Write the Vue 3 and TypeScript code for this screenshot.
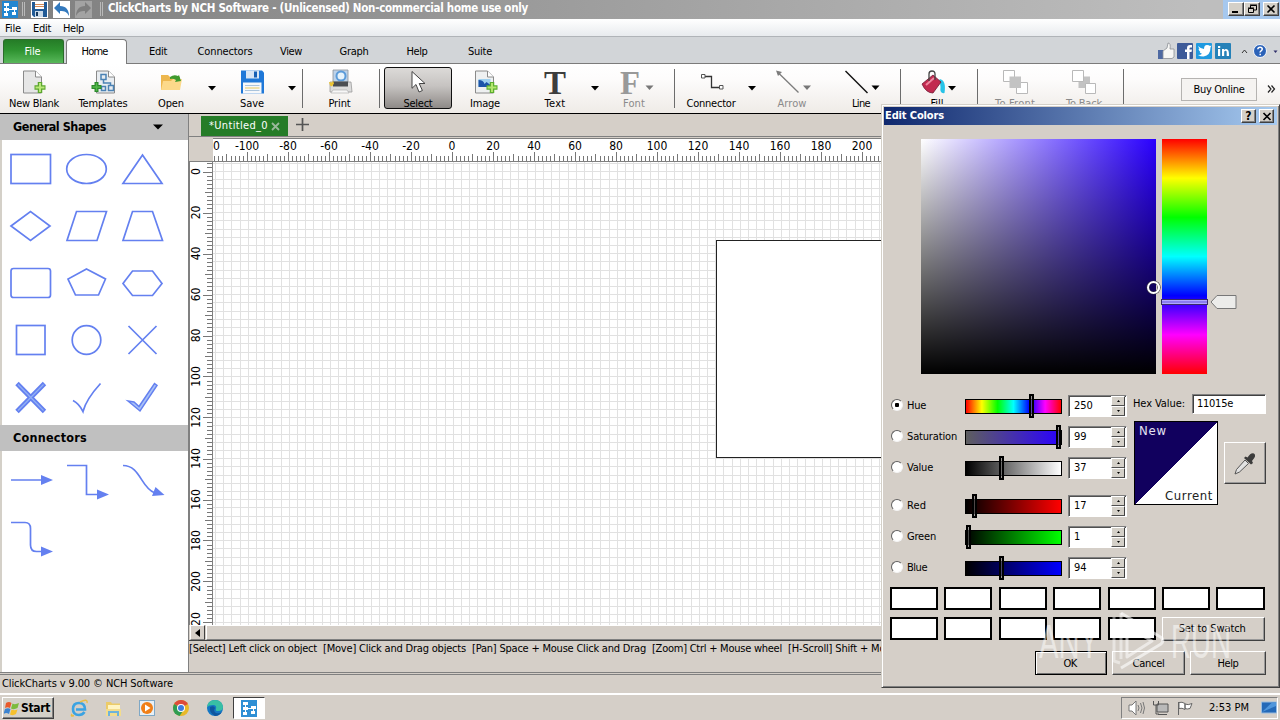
<script setup lang="ts">
interface Tool {
  id: string
  w: number
  label?: string
  tw?: number
  gap?: number
  off?: boolean
}

const setSpacing = (el: HTMLElement, width: number) => {
  const n = (el.textContent ?? '').length
  const natural = el.getBoundingClientRect().width
  if (n > 1 && natural > 0) el.style.letterSpacing = `${((width - natural) / n).toFixed(3)}px`
}
const vTrack = {
  mounted: (el: HTMLElement, binding: { value?: number }) => {
    if (binding.value) setSpacing(el, binding.value)
  },
}

const menus = [
  { t: 'File', w: 16 },
  { t: 'Edit', w: 18 },
  { t: 'Help', w: 21 },
]

const tabs = [
  { t: 'Edit', w: 18, cell: 62 },
  { t: 'Connectors', w: 55, cell: 72 },
  { t: 'View', w: 22, cell: 60 },
  { t: 'Graph', w: 29, cell: 66 },
  { t: 'Help', w: 21, cell: 60 },
  { t: 'Suite', w: 24, cell: 66 },
]

const tools: Tool[] = [
  { id: 'new', w: 68, label: 'New Blank', tw: 50 },
  { id: 'templates', w: 70, label: 'Templates', tw: 49 },
  { id: 'open', w: 66, label: 'Open', tw: 26 },
  { id: 'drop', w: 16 },
  { id: 'save', w: 64, label: 'Save', tw: 24 },
  { id: 'drop', w: 16 },
  { id: 'sep', w: 5 },
  { id: 'print', w: 69, label: 'Print', tw: 22 },
  { id: 'sep', w: 10 },
  { id: 'select', w: 68, label: 'Select', tw: 29 },
  { id: 'image', w: 66, label: 'Image', tw: 30 },
  { id: 'text', w: 64, gap: 5, label: 'Text', tw: 21 },
  { id: 'drop', w: 16 },
  { id: 'font', w: 62, label: 'Font', tw: 22, off: true },
  { id: 'sep', w: 18 },
  { id: 'connector', w: 56, label: 'Connector', tw: 49 },
  { id: 'drop', w: 26 },
  { id: 'arrow', w: 54, label: 'Arrow', tw: 29, off: true },
  { id: 'line', w: 72, gap: 6, label: 'Line', tw: 18 },
  { id: 'sep', w: 6 },
  { id: 'fill', w: 68, label: 'Fill', tw: 13 },
  { id: 'sep', w: 12 },
  { id: 'front', w: 64, label: 'To Front', tw: 40, off: true },
  { id: 'back', w: 74, label: 'To Back', tw: 36, off: true },
  { id: 'sep', w: 5 },
]

const range = (n: number) => Array.from({ length: n }, (_, i) => i)

const STEP = 4.1
const snap = (v: number) => Math.floor(v) + 0.5
const tickLen = (k: number) => (k % 10 === 0 ? 9 : k % 5 === 0 ? 7 : 5)

const topTicks = range(400)
  .map((i) => i - 70)
  .map((k) => ({ x: snap(239.4 + k * STEP), k }))
  .filter((t) => t.x > 0 && t.x < 680)
  .map((t) => `M${t.x} 22V${22 - tickLen(t.k)}`)
  .join('')
const topLabels = range(16).map((i) => ({ v: (i - 5) * 20, x: 239 + (i - 5) * 41 }))

const leftTicks = range(130)
  .map((i) => i - 2)
  .map((k) => ({ y: snap(10 + k * STEP), k }))
  .filter((t) => t.y > 0 && t.y < 463)
  .map((t) => `M22 ${t.y}H${22 - tickLen(t.k)}`)
  .join('')
const leftLabels = range(12).map((i) => ({ v: i * 20, y: 9.5 + i * 41 }))

const gridV = range(90)
  .map((k) => `M${snap(2.5 + k * 8.2)} 0V463`)
  .join('')
const gridH = range(60)
  .map((k) => `M0 ${snap(1.5 + k * 8.2)}H680`)
  .join('')

const hints = [
  { t: '[Select] Left click on object', w: 128 },
  { t: '[Move] Click and Drag objects', w: 143 },
  { t: '[Pan] Space + Mouse Click and Drag', w: 174 },
  { t: '[Zoom] Ctrl + Mouse wheel', w: 130 },
  { t: '[H-Scroll] Shift + Mouse wheel', w: 146 },
]

const channels = [
  { id: 'hue', t: 'Hue', w: 19, v: '250', at: 63, on: true },
  { id: 'sat', t: 'Saturation', w: 50, v: '99', at: 90, on: false },
  { id: 'val', t: 'Value', w: 26, v: '37', at: 33, on: false },
  { id: 'red', t: 'Red', w: 19, v: '17', at: 6, on: false },
  { id: 'green', t: 'Green', w: 29, v: '1', at: 0, on: false },
  { id: 'blue', t: 'Blue', w: 20, v: '94', at: 33, on: false },
]
</script>

<template>
  <div class="screen">
    <header class="title">
      <svg class="title-icons" width="106" height="19" viewBox="0 0 106 19">
        <rect x="2" y="1" width="16" height="17" fill="#2286d0" />
        <path d="M4 3h5v3H4zM4 8h5v3H4zM4 13h4v3H4zM12 7h5v3h-5zM12 12h4v3h-4z" fill="#fff" />
        <path d="M6.500 6v7M9 9.500h3M14.500 9v4" stroke="#fff" />
        <path d="M22.500 2v14M24.500 2v14M100.500 2v14M102.500 2v14" stroke="#b9b9b9" />
        <rect x="31" y="1" width="17" height="17" fill="#fff" />
        <path d="M32 2h15v15H34l-2-2z" fill="#205a96" />
        <path d="M35 2h9v7h-9z" fill="#fff" />
        <path d="M35 4.500h9M35 6.500h9" stroke="#d48a56" />
        <path d="M35 11h8v6h-8z" fill="#c9dae9" />
        <path d="M36 12h2v4h-2z" fill="#17395f" />
        <rect x="53" y="1" width="17" height="17" fill="#fff" />
        <path d="M54 8l6-6v4c6 0 9 4 9 10c-2-4-4-5-9-5v3z" fill="#3379bd" />
        <rect x="75" y="1" width="17" height="17" fill="#a3a3a3" />
        <path d="M91 8l-6-6v4c-6 0-9 4-9 10c2-4 4-5 9-5v3z" fill="#7e7e7e" />
      </svg>
      <b v-track="420" class="title-text">ClickCharts by NCH Software - (Unlicensed) Non-commercial home use only</b>
      <div class="win-buttons">
        <i class="wb"><svg width="14" height="12"><path d="M3 9h6" stroke="#000" stroke-width="2" /></svg></i>
        <i class="wb"><svg width="14" height="12"><path d="M5.500 5V2.500h6V7H9M5 2h7M3.500 5.500h5v4h-5zM3 5h6" fill="none" stroke="#000" /></svg></i>
        <i class="wb last"><svg width="14" height="12"><path d="M3.500 2.500l7 7M10.500 2.500l-7 7" stroke="#000" stroke-width="1.600" /></svg></i>
      </div>
    </header>

    <nav class="menu">
      <span v-for="m in menus" :key="m.t" class="menu-item"><span v-track="m.w" class="tx">{{ m.t }}</span></span>
    </nav>

    <nav class="tabs">
      <span class="tab file"><span v-track="16" class="tx">File</span></span>
      <span class="tab home"><span v-track="26" class="tx">Home</span></span>
      <span v-for="t in tabs" :key="t.t" class="tab" :style="{ width: t.cell + 'px' }"><span v-track="t.w" class="tx">{{ t.t }}</span></span>
      <svg class="social" width="122" height="24" viewBox="1158 39 122 24">
        <path d="M1158 50h5v9h-5z" fill="#4e69a2" />
        <path d="M1163 51l4-3 1-5q3 0 2 6h4v8l-2 1.500h-9z" fill="#f7f7f5" stroke="#8c8f96" stroke-width=".8" />
        <rect x="1177" y="43" width="16" height="16" rx="1" fill="#3d5a98" />
        <path d="M1187 59v-7h-2v-2.500h2V48q0-3 3-3h2v2.500h-1.500q-1 0-1 1v1h2.500l-.5 2.500h-2v7z" fill="#fff" />
        <rect x="1196" y="43" width="16" height="16" rx="1" fill="#1f9ae0" />
        <path d="M1198 46q3 3 6 3q0-4 3-4q2 0 3 1l1.500-.5-1 2q0 8-7 9-3 0-5.500-1.500 3 0 4-1.200-2-.3-2.500-2h1q-2-1-2-3l1 .2q-1.500-1.300-.5-3z" fill="#fff" />
        <rect x="1215" y="43" width="16" height="16" rx="1" fill="#2581b8" />
        <path d="M1218 49h2.200v7h-2.200zM1218 46h2.200v2h-2.200zM1222 49h2v1q2-2 4 0q1 .8 1 6h-2.300v-4q0-1.300-1.200-1.300t-1.300 1.300v4H1222z" fill="#fff" />
        <path d="M1242 53l2.500-3 2.500 3" fill="none" stroke="#333" />
        <circle cx="1260" cy="51" r="6.500" fill="#2b62b8" stroke="#f5f8fc" />
        <path d="M1257.800 49.300q.2-2 2.300-2t2.200 1.800q0 1-1.200 1.700t-.9 1.700M1260.200 53.700v1.600" fill="none" stroke="#fff" stroke-width="1.500" />
        <path d="M1273.500 50.500h4l-2 2.500z" fill="#2f2f6a" />
      </svg>
    </nav>

    <div class="ribbon">
      <div
        v-for="(t, i) in tools"
        :key="i"
        class="tool"
        :class="[t.id, { off: t.off }]"
        :style="{ width: t.w + 'px', marginLeft: (t.gap ?? 0) + 'px' }"
      >
        <svg v-if="t.id === 'drop'" class="drop-icon" width="9" height="5"><path d="M0 0h8L4 4.500z" fill="#000" /></svg>
        <template v-else-if="t.id !== 'sep'">
          <svg class="tool-icon" width="60" height="30" viewBox="-30 68 60 30">
            <g v-if="t.id === 'new'">
              <path d="M-10.500 71h12l6 6v16h-18z" fill="#e6e6e6" stroke="#8a8a8a" />
              <path d="M1.500 71v6h6" fill="#fff" stroke="#8a8a8a" />
              <path d="M6 82v11M.5 87.500h11" stroke="#5ca62e" stroke-width="4.500" />
              <path d="M6 83v9M1.500 87.500h9" stroke="#b8e878" stroke-width="2" />
            </g>
            <g v-else-if="t.id === 'templates'">
              <path d="M-6.500 71h12l6 6v16h-18z" fill="#e9edf1" stroke="#8a8a8a" />
              <path d="M5.500 71v6h6" fill="#fff" stroke="#8a8a8a" />
              <path d="M-2 74.500h5v5h-5zM-1.500 86.500h4v4h-4zM5.500 85.500h5v5h-5zM.5 80v3h7v2" fill="none" stroke="#4b82b4" stroke-width="1.500" />
              <path d="M-6.500 82v10M-11.500 87h10" stroke="#2c8a2c" stroke-width="4" />
              <path d="M-6.500 83v8M-10.500 87h8" stroke="#54b84a" stroke-width="1.500" />
            </g>
            <g v-else-if="t.id === 'open'">
              <path d="M-10 75h7l2 2h10v13h-19z" fill="#edb74e" />
              <path d="M-10 90l2-9h8l2-2h9l-2 11z" fill="#fcd98a" />
              <path d="M-1 77q4-3 8-1l1-1 2 6-6 1 1-2q-3-2-6-1z" fill="#3f9a2e" />
            </g>
            <g v-else-if="t.id === 'save'">
              <path d="M-11 70.500h21l2 2V93.500h-23z" fill="#1f78d8" />
              <path d="M-6 70.500H7v8H-6z" fill="#d9e6f4" />
              <path d="M2 71.500h3v6H2z" fill="#1760b4" />
              <path d="M-9 82.500H9.500v11H-9z" fill="#f6f8fa" />
              <path d="M-7 85.500H7.500M-7 90.500H7.500" stroke="#aac4dc" />
              <path d="M-7 88H7.500" stroke="#e8c95c" />
            </g>
            <g v-else-if="t.id === 'print'">
              <path d="M-7 70h15v13H-7z" fill="#bcd2ea" stroke="#8d9298" stroke-width=".8" />
              <circle cx="1" cy="76" r="4.500" fill="#e7f3fb" stroke="#5b9bd9" stroke-width="2" />
              <path d="M-10 82h21l1 10h-22z" fill="#dcdcdc" stroke="#9a9a9a" stroke-width=".8" />
              <path d="M-7 81.500H8v5H-7z" fill="#4b4e52" />
              <path d="M-7 90h14l2 3h-18z" fill="#f7f7f7" stroke="#aaa" stroke-width=".6" />
              <path d="M-11 82l3 .5 1-2 1 3-2 3-2-1z" fill="#ecc434" />
            </g>
            <g v-else-if="t.id === 'select'">
              <path d="M-6 71.500v16.800l4-3.800 3 7.500 3.400-1.500-3.200-7h5.800z" fill="#fff" stroke="#444" />
            </g>
            <g v-else-if="t.id === 'image'">
              <path d="M-9.500 71H2.500l6 6v16h-18z" fill="#eef0f1" stroke="#8a8a8a" />
              <path d="M2.500 71v6h6" fill="#fff" stroke="#8a8a8a" />
              <path d="M-6.500 79H5.500v8h-12z" fill="#9fd0ef" />
              <path d="M-6.500 80q5 0 6 4l2-2 4 3v2h-12z" fill="#1c55a8" />
              <path d="M7 82v11M1.500 87.500h11" stroke="#5cae2e" stroke-width="4.500" />
              <path d="M7 83v9M2.500 87.500h9" stroke="#b3e66e" stroke-width="2" />
            </g>
            <g v-else-if="t.id === 'text'">
              <text x="0" y="93.500" text-anchor="middle" class="glyph" textLength="22" lengthAdjust="spacingAndGlyphs">T</text>
            </g>
            <g v-else-if="t.id === 'font'">
              <text x="-4" y="93.500" text-anchor="middle" class="glyph grey" textLength="20" lengthAdjust="spacingAndGlyphs">F</text>
              <path d="M11.500 85.500h8l-4 4.500z" fill="#777" />
            </g>
            <g v-else-if="t.id === 'connector'">
              <path d="M-6 76.500H.5v11H8" fill="none" stroke="#333" stroke-width="1.300" />
              <path d="M-9.500 74.500h3.500v3.500h-3.500zM8.500 85.500H12V89H8.500z" fill="#fff" stroke="#555" />
            </g>
            <g v-else-if="t.id === 'arrow'">
              <path d="M6.500 92.500L-14 72.500" stroke="#7c7c7c" stroke-width="1.300" />
              <path d="M-16 70.500l6 1.500-4 4z" fill="#7c7c7c" />
              <path d="M11 85.500h8l-4 4.500z" fill="#777" />
            </g>
            <g v-else-if="t.id === 'line'">
              <path d="M-15.500 71L6.500 93" stroke="#111" stroke-width="1.500" />
              <path d="M10.500 85.500h8l-4 4.500z" fill="#000" />
            </g>
            <g v-else-if="t.id === 'fill'">
              <path d="M2.500 79q7 1 5 14q-5 1-4-6z" fill="#27c3e8" />
              <path d="M-15 84l11-9 8 7-8 11q-7 0-11-9z" fill="#c22b50" stroke="#6f1832" stroke-width=".8" />
              <path d="M-11 85l8-7" stroke="#ee88a0" stroke-width="2" />
              <path d="M-8 81v-7q0-3 3-3t3 3v6" fill="none" stroke="#444" stroke-width="1.300" />
              <path d="M11 86h8l-4 4.500z" fill="#000" />
            </g>
            <g v-else-if="t.id === 'front'">
              <path d="M-11.500 70.500h11v11h-11zM1.500 82.500h11v11h-11z" fill="#fff" stroke="#b9b9b9" />
              <path d="M-5.500 76.500H6v11.500H-5.500z" fill="#c3c3c3" />
            </g>
            <g v-else>
              <path d="M-5.500 76.500H6v11.500H-5.500z" fill="#c3c3c3" />
              <path d="M-11.500 70.500h11v11h-11zM1.500 83.500h10v10h-10z" fill="#fff" stroke="#b9b9b9" />
            </g>
          </svg>
          <span v-track="t.tw" class="tx">{{ t.label }}</span>
        </template>
      </div>
      <button class="buy"><span v-track="51" class="tx">Buy Online</span></button>
      <svg class="more" width="9" height="8"><path d="M1 .5L4 4 1 7.500M4.500 .5L7.500 4l-3 3.500" fill="none" stroke="#222" stroke-width="1.200" /></svg>
    </div>

    <main class="work">
      <aside class="side">
        <h2 class="side-head">
          <b v-track="93" class="tx big">General Shapes</b>
          <svg width="10" height="6"><path d="M0 .5h10L5 5.500z" fill="#000" /></svg>
        </h2>
        <svg class="shapes" width="186" height="285" viewBox="2 140 186 285">
          <g fill="none" stroke="#6480f0" stroke-width="1.700">
            <rect x="11" y="154.500" width="39.500" height="29" />
            <ellipse cx="86.500" cy="169" rx="19.800" ry="14.500" />
            <path d="M142.500 155l19.500 28.500h-39z" />
            <path d="M11 226l19.500-14.500L50 226l-19.500 14.500z" />
            <path d="M76.500 211.500h30L97 240.500H67z" />
            <path d="M132.500 211.500h20l10 29h-39.500z" />
            <rect x="11" y="268.500" width="39.500" height="29" rx="2.500" />
            <path d="M86.500 269l19 10-7 16H75.500l-7.500-16z" />
            <path d="M132.500 271h20l9.500 12.500-9.500 12h-20l-9.500-12z" />
            <rect x="16.500" y="325.500" width="28.500" height="29" />
            <circle cx="86.500" cy="340" r="14.300" />
            <path d="M128.500 326l28 28M156.500 326l-28 28" />
            <path d="M73 400.500q6 3 10 11q3-12 17.500-28" />
          </g>
          <path d="M17 383.500L44.500 411.500M44.500 383.500L17 411.500" fill="none" stroke="#6480f0" stroke-width="4.800" />
          <path d="M18 384.500L43.500 410.500M43.500 384.500L18 410.500" fill="none" stroke="#92b0f4" stroke-width="1.200" />
          <path d="M128 401l6 1 5 4.500L154.500 383.500l2.500 2L140 411z" fill="#a9c2f7" stroke="#6480f0" stroke-width="1.500" />
        </svg>
        <h2 class="side-head"><b v-track="74" class="tx big">Connectors</b></h2>
        <svg class="shapes" width="186" height="120" viewBox="2 451 186 120">
          <g fill="none" stroke="#6480f0" stroke-width="1.700">
            <path d="M11 480H42M67 465.500H86.500V494.500H98M11 522.500H25q5.500 0 5.500 6V545q0 6.500 6 6.500H42M123 465.500c17 0 18 22 31 27" />
          </g>
          <path d="M41 475l12 5-12 5zM97 489.500l12 5-12 5zM41 546.500l12 5-12 5zM155.500 487l9 8-12.500 1z" fill="#6480f0" />
        </svg>
      </aside>

      <section class="doc">
        <div class="doc-tabs">
          <span class="doc-tab"><span v-track="59" class="tx">*Untitled_0</span><svg width="9" height="9"><path d="M1 1l7 7M8 1L1 8" stroke="#9bb89b" stroke-width="1.800" /></svg></span>
          <svg class="plus" width="13" height="13"><path d="M6.500 0v13M0 6.500h13" stroke="#555" stroke-width="1.700" /></svg>
        </div>
        <div class="rulers">
          <div class="corner"></div>
          <svg class="ruler-top" width="1067" height="24">
            <path :d="topTicks" stroke="#777" />
            <text v-for="l in topLabels" :key="l.v" :x="l.x" y="11" text-anchor="middle" class="num">{{ l.v }}</text>
            <text x="0" y="11" class="num">0</text>
          </svg>
          <svg class="ruler-left" width="24" height="463">
            <path :d="leftTicks" stroke="#777" />
            <text v-for="l in leftLabels" :key="l.v" :transform="`translate(10 ${l.y}) rotate(-90)`" text-anchor="middle" class="num">{{ l.v }}</text>
          </svg>
          <svg class="canvas" width="1067" height="463">
            <path :d="gridV" stroke="#e1e1e1" />
            <path :d="gridH" stroke="#e1e1e1" />
            <rect x="503.500" y="78.500" width="300" height="217" fill="#fff" stroke="#222" />
          </svg>
        </div>
        <div class="hscroll">
          <i class="hs-btn"><svg width="5" height="8"><path d="M5 0v8L0 4z" fill="#000" /></svg></i>
          <i class="hs-thumb"></i>
        </div>
        <div class="hints"><span v-for="h in hints" :key="h.t" v-track="h.w" class="tx">{{ h.t }}</span></div>
      </section>
    </main>

    <footer class="status"><span v-track="171" class="tx">ClickCharts v 9.00 © NCH Software</span></footer>

    <footer class="taskbar">
      <button class="start">
        <svg width="16" height="15" viewBox="0 0 16 15">
          <path d="M2 2q3-2 5.500 0L6 7Q3.500 5.500 1 7z" fill="#e8592b" />
          <path d="M8.500 2.500Q11 4 15 2l-1.500 5Q10 9 7 7.500z" fill="#7cbb3c" />
          <path d="M1 8q3-1.500 5.500 0L5 13q-3-2-5.500 0z" fill="#3c83d0" />
          <path d="M7.500 8.500q3 1.500 6 0L12 13q-3 2-6 .5z" fill="#f6c02c" />
        </svg>
        <b v-track="29" class="tx st">Start</b>
      </button>
      <svg class="apps" width="165" height="20" viewBox="66 697 165 20">
        <path d="M84.500 711q-2 3-5.500 3-6 0-6-6t6-6q6 0 6 6.500h-9" fill="none" stroke="#3ba3e2" stroke-width="2.600" />
        <path d="M72 713q-2 3 2 1.500M80 701q8-4 7 1" fill="none" stroke="#e8bd47" stroke-width="1.400" />
        <path d="M106 701h5l1 1.500h8V714h-14z" fill="#eccb68" />
        <path d="M108 704h12v4h-12z" fill="#fff4c2" />
        <path d="M106 708h15v7h-15z" fill="#f3dc8c" />
        <path d="M109 715v-4h9v4" fill="none" stroke="#6eb3dc" stroke-width="2" />
        <rect x="139.500" y="699.500" width="15" height="15" fill="#e8f0f6" stroke="#7fa8c6" />
        <circle cx="147" cy="707" r="6" fill="#f07f18" />
        <path d="M145 703.500l5.500 3.500-5.500 3.500z" fill="#fff" />
        <circle cx="181" cy="707" r="8" fill="#e8b92a" />
        <path d="M181 707L174.100 703a8 8 0 0 1 13.800 0z" fill="#dd4b3b" />
        <path d="M181 707L174.100 703a8 8 0 0 0 5.500 11.900l4-6z" fill="#2f9c52" />
        <circle cx="181" cy="707" r="4" fill="#fff" />
        <circle cx="181" cy="707" r="3" fill="#3d7de0" />
        <circle cx="215" cy="707" r="8" fill="#1477c4" />
        <path d="M207 706q1-7 8-7t8 7q0 4-5 4-3 0-2-2 1-4-3-4-4 0-6 2z" fill="#38bfa4" />
        <path d="M210 706q4-2 5 1-2 3 1 5 3 1 6-1-3 4-7 4-6-3-5-9z" fill="#0f559d" />
      </svg>
      <span class="active">
        <svg width="16" height="17" viewBox="2 1 16 17">
          <rect x="2" y="1" width="16" height="17" fill="#2f8fd4" />
          <path d="M4 3h5v3H4zM4 8h5v3H4zM4 13h4v3H4zM12 7h5v3h-5zM12 12h4v3h-4z" fill="#fff" />
          <path d="M6.500 6v7M9 9.500h3M14.500 9v4" stroke="#fff" />
        </svg>
      </span>
      <div class="tray">
        <svg width="76" height="18" viewBox="1126 698 76 18">
          <path d="M1129 704h3l4-4v14l-4-4h-3z" fill="#fff" stroke="#777" />
          <path d="M1138 704q2 3 0 6M1140.500 702q3 5 0 10M1143 701q3 6 0 12" fill="none" stroke="#777" />
          <path d="M1157 703h11v8h-11z" fill="#b9b9b9" stroke="#555" />
          <path d="M1158 713.500h9" stroke="#555" />
          <path d="M1153.500 700v4h5v-4M1156 704v9h3" fill="none" stroke="#555" />
          <path d="M1178.500 701v13M1179 701.500q3-1 6 1v6q-3-2-6-1zM1185 703q3 1.500 7-.5l-2 5q-3 1-5 0z" fill="#fff" stroke="#666" />
        </svg>
        <span v-track="40" class="tx clock">2:53 PM</span>
        <svg class="desk" width="16" height="14"><path d="M.5 1h15v11H.5z" fill="#2469b8" stroke="#98bce0" /><path d="M1 11L11 1.500h4V5z" fill="#4f96dc" /></svg>
      </div>
    </footer>

    <div class="dialog">
      <div class="dlg-title">
        <b v-track="59" class="tx">Edit Colors</b>
        <span class="dlg-btns">
          <i class="wb"><b class="q">?</b></i>
          <i class="wb"><svg width="12" height="11"><path d="M2.500 2l7 7M9.500 2l-7 7" stroke="#000" stroke-width="1.700" /></svg></i>
        </span>
      </div>
      <div class="pickers">
        <div class="sv"><i class="ring"></i></div>
        <div class="hue-bar"><i class="hue-mark"></i></div>
        <svg class="pointer" width="28" height="16"><path d="M1 8l6-6.500h19v13H7z" fill="#ececea" stroke="#777" /></svg>
      </div>
      <div class="mid">
        <div class="channels">
          <div v-for="c in channels" :key="c.id" class="chan" :class="c.id">
            <i class="radio" :class="{ on: c.on }"></i>
            <span class="chan-name"><span v-track="c.w" class="tx">{{ c.t }}</span></span>
            <span class="slider"><i class="thumb" :style="{ left: c.at + 'px' }"></i></span>
            <span class="field">
              <span class="tx">{{ c.v }}</span>
              <span class="spin">
                <i><svg width="3" height="2"><path d="M0 2h3L1.500 0z" /></svg></i>
                <i><svg width="3" height="2"><path d="M0 0h3L1.500 2z" /></svg></i>
              </span>
            </span>
          </div>
        </div>
        <div class="right">
          <div class="hex"><span v-track="52" class="tx">Hex Value:</span><span class="hex-in"><span v-track="36" class="tx">11015e</span></span></div>
          <div class="preview-row">
            <div class="preview">
              <span v-track="28" class="tx new-c">New</span>
              <span v-track="48" class="tx cur-c">Current</span>
            </div>
            <button class="eye">
              <svg width="26" height="26" viewBox="0 0 26 26">
                <path d="M3 24l1.500-4.500L13 10l3.500 3.500L7.500 22z" fill="#e2e2e2" stroke="#555" />
                <path d="M12 8l1.500-1.500 2 1Q19 2 22 3.500q3 2-2 7.500l1 2-2 1.500z" fill="#3c3c3c" />
              </svg>
            </button>
          </div>
        </div>
      </div>
      <div class="swatches">
        <i v-for="n in 12" :key="n" class="swatch"></i>
        <button class="btn wide"><span v-track="67" class="tx">Set to Swatch</span></button>
      </div>
      <div class="actions">
        <button class="btn ok"><span v-track="13" class="tx">OK</span></button>
        <button class="btn cancel"><span v-track="32" class="tx">Cancel</span></button>
        <button class="btn help"><span v-track="21" class="tx">Help</span></button>
      </div>
    </div>

    <svg class="watermark" width="200" height="66" viewBox="1036 608 200 66">
      <g class="wm-text">
        <text x="1039" y="658" textLength="60" lengthAdjust="spacingAndGlyphs">ANY</text>
        <text x="1171" y="658" textLength="60" lengthAdjust="spacingAndGlyphs">RUN</text>
      </g>
      <g fill="none" stroke="#fff" stroke-width="3" stroke-linejoin="round">
        <path d="M1121 613L1162 638Q1164 641 1161 644L1121 668" stroke-opacity=".6" />
        <path d="M1127 627v30l25-16z" stroke-opacity=".55" />
        <path d="M1121 613v46M1114 617v44l6 2" stroke-opacity=".45" />
      </g>
    </svg>
  </div>
</template>

<style>
body {
  overflow: hidden;
}
</style>

<style scoped>
.screen {
  position: relative;
  width: 1280px;
  height: 720px;
  overflow: hidden;
  display: flex;
  flex-direction: column;
  background: #d5cfc8;
  color: #000;
  font: 11px/14px "DejaVu Sans Condensed", "DejaVu Sans", sans-serif;
}
.screen * { box-sizing: border-box; }
svg { display: block; flex: none; }
i { font-style: normal; display: block; }
button { font: inherit; padding: 0; color: inherit; border-radius: 0; }
.tx { display: inline-block; white-space: pre; }

.title {
  height: 19px;
  flex: none;
  display: flex;
  align-items: center;
  background: linear-gradient(90deg, #7f7f7f, #bebebe 1200px);
}
.title-text { display: inline-block; white-space: pre; margin-left: 2px; color: #fff; font-size: 11.5px; margin-top: -3px; }
.win-buttons {
  margin-left: auto;
  width: 57px;
  height: 19px;
  padding: 2px 0 0 5px;
  display: flex;
  background: #a6c8ee;
}
.wb {
  width: 15px;
  height: 14px;
  background: #d4d0c8;
  border: 1px solid;
  border-color: #fff #404040 #404040 #fff;
  box-shadow: inset -1px -1px #808080;
  display: flex;
  align-items: center;
  justify-content: center;
  flex: none;
}
.wb.last { margin-left: 3px; }
.win-buttons .wb { width: 16px; }

.menu {
  height: 18px;
  flex: none;
  display: flex;
  gap: 12px;
  padding: 3px 0 0 5px;
  background: linear-gradient(#fff, #e8ebee);
  border-bottom: 1px solid #b0b4b8;
}
.menu-item { height: 14px; }

.tabs {
  height: 27px;
  flex: none;
  display: flex;
  align-items: flex-end;
  background: #d2d5d8;
  border-bottom: 1px solid #7b7b7b;
}
.tab { display: flex; justify-content: center; align-items: center; height: 24px; padding-top: 2px; }
.tab.file {
  margin-left: 3px;
  width: 61px;
  color: #fff;
  border: 1px solid #2c6b2c;
  border-bottom: 0;
  border-radius: 3px 3px 0 0;
  background: linear-gradient(#257c27, #2f9331 45%, #58b85a);
  padding: 1px 2px 0 0;
}
.tab.home {
  margin: 0 0 -1px 2px;
  width: 61px;
  height: 25px;
  background: #fff;
  border: 1px solid #7b7b7b;
  border-bottom: 0;
  border-radius: 4px 4px 0 0;
  padding: 0 4px 0 0;
}
.social { margin-left: auto; }

.ribbon {
  height: 50px;
  flex: none;
  display: flex;
  background: linear-gradient(#fff, #fdfcfc 30%, #efebe7);
  border-bottom: 1px solid #000;
}
.tool { display: flex; flex-direction: column; align-items: center; flex: none; height: 49px; padding-top: 4px; }
.tool .tx { margin-top: -1px; }
.tool-icon { overflow: visible; }
.tool.off { color: #8a8a8a; }
.tool.sep { padding: 0; justify-content: center; }
.tool.sep::before { content: ''; width: 1px; height: 39px; background: #6c6c6c; }
.tool.drop { padding-top: 22px; }
.tool.select {
  margin-top: 3px;
  height: 42px;
  padding-top: 0;
  border: 1px solid #111;
  border-radius: 3px;
  background: linear-gradient(#dcdad8, #c6c3c1 45%, #8e8a87);
}
.glyph { font: bold 34px "Liberation Serif", serif; fill: #3d3d3d; }
.glyph.grey { fill: #999; }
.buy {
  margin: 14px 0 0 55px;
  width: 76px;
  height: 23px;
  flex: none;
  border: 1px solid #b5b3b1;
  background: #f5f3f1;
}
.more { margin: 21px 0 0 10px; }

.work { height: 559px; flex: none; display: flex; border-bottom: 1px solid #808080; }
.side { width: 189px; height: 558px; flex: none; background: #fff; border-left: 2px solid #d4d0c8; border-right: 1px solid #808080; }
.side-head {
  margin: 0 0 0 -2px;
  padding: 0 25px 0 13px;
  height: 26px;
  display: flex;
  align-items: center;
  justify-content: space-between;
  background: #c0c0c0;
}
.big { font-size: 12.500px; font-weight: bold; }

.doc { flex: 1; min-width: 0; display: flex; flex-direction: column; }
.doc-tabs { height: 23px; flex: none; display: flex; align-items: flex-start; border-bottom: 1px solid #808080; padding: 2px 0 0 12px; }
.doc-tab {
  width: 87px;
  height: 20px;
  padding: 0 8px 0 8px;
  display: flex;
  align-items: center;
  justify-content: space-between;
  background: #257c27;
  color: #fff;
}
.plus { margin: 2px 0 0 8px; }
.rulers { flex: none; display: grid; grid-template-columns: 24px 1067px; grid-template-rows: 25px 463px; }
.corner { border-bottom: 1px solid #808080; }
.ruler-top { background: #fff; border-top: 1px solid #808080; border-bottom: 1px solid #808080; margin-top: 1px; }
.ruler-left { background: #fff; border-right: 1px solid #808080; border-left: 1px solid #808080; }
.canvas { background: #fff; }
.num { font: 12px "DejaVu Sans Condensed", "DejaVu Sans", sans-serif; fill: #000; letter-spacing: -.1px; }
.hscroll { height: 16px; flex: none; display: flex; border-bottom: 1px solid #404040; background: #d5cfc8; padding-left: 1px; }
.hs-btn {
  width: 15px;
  height: 15px;
  display: flex;
  align-items: center;
  justify-content: center;
  border: 1px solid;
  border-color: #fff #404040 #808080 #fff;
}
.hs-thumb { flex: 1; border-top: 1px solid #fff; border-left: 1px solid #fff; border-bottom: 1px solid #808080; margin-left: 1px; }
.hints { display: flex; gap: 6px; white-space: nowrap; overflow: hidden; height: 17px; padding-top: 1px; }
.hints .tx { flex: none; }

.status {
  height: 20px;
  flex: none;
  margin-top: 1px;
  padding: 2px 0 0 2px;
  border-top: 1px solid #808080;
  border-bottom: 1px solid #fff;
}
.taskbar { height: 27px; flex: none; border-top: 1px solid #fff; display: flex; align-items: center; padding: 0 2px; }
.start {
  width: 52px;
  height: 22px;
  display: flex;
  align-items: center;
  gap: 1px;
  padding-left: 1px;
  background: #d4d0c8;
  border: 1px solid;
  border-color: #fff #404040 #404040 #fff;
  box-shadow: inset -1px -1px #808080;
}
.st { font-size: 12px; font-weight: bold; }
.apps { margin-left: 12px; }
.active {
  margin-left: 2px;
  width: 32px;
  height: 22px;
  display: flex;
  align-items: center;
  justify-content: center;
  background: #fff;
  border: 1px solid;
  border-color: #404040 #fff #fff #404040;
}
.tray {
  margin-left: auto;
  width: 157px;
  height: 22px;
  padding-left: 4px;
  display: flex;
  align-items: center;
  border: 1px solid;
  border-color: #808080 #fff #fff #808080;
}
.clock { margin-left: 7px; }
.desk { margin-left: auto; }

.dialog {
  position: absolute;
  left: 881px;
  top: 104px;
  width: 399px;
  height: 584px;
  background: #d5cfc8;
  border: 1px solid;
  border-color: #d4d0c8 #404040 #404040 #d4d0c8;
  box-shadow: inset 1px 1px #fff, inset -1px -1px #808080;
  padding: 2px;
}
.dlg-title {
  height: 18px;
  margin: 0;
  padding: 0 3px 0 1px;
  display: flex;
  align-items: center;
  justify-content: space-between;
  color: #fff;
  background: linear-gradient(90deg, #0f286e, #a6caf0);
}
.dlg-btns { display: flex; gap: 3px; color: #000; }
.q { font-size: 12px; line-height: 12px; }
.pickers { height: 235px; margin: 14px 0 0 37px; display: flex; gap: 6px; }
.sv {
  position: relative;
  width: 235px;
  background: linear-gradient(transparent, #000), linear-gradient(90deg, #fff, #2a00ff);
}
.ring {
  position: absolute;
  left: 226px;
  top: 142px;
  width: 13px;
  height: 13px;
  border: 2px solid #fff;
  border-radius: 50%;
  box-shadow: 0 0 0 .6px #333, inset 0 0 0 .6px #333;
}
.hue-bar {
  position: relative;
  width: 45px;
  background: linear-gradient(#f00, #ff0 16.67%, #0f0 33.33%, #0ff 50%, #00f 66.67%, #f0f 83.33%, #f00);
}
.hue-mark { position: absolute; left: -1px; top: 160px; width: 47px; height: 6px; border: 1px solid #3a2a6a; background: #8b7cf0; box-shadow: inset 0 1px #b0a8ff, inset 0 -1px #b0a8ff; }
.pointer { margin: 155px 0 0 -3px; }

.mid { display: flex; height: 213px; }
.channels { width: 249px; padding: 21px 0 0 7px; flex: none; }
.chan { height: 31px; display: flex; align-items: flex-start; }
.chan.red { margin-top: 7px; }
.radio {
  width: 12px;
  height: 12px;
  margin: 4px 0 0 0;
  border-radius: 50%;
  background: #fff;
  border: 1px solid;
  border-color: #606060 #f4f4f4 #f4f4f4 #606060;
}
.radio.on { background: radial-gradient(circle, #000 0 2px, #fff 2.500px); }
.chan-name { width: 58px; margin: 4px 0 0 4px; white-space: nowrap; }
.slider { position: relative; width: 97px; height: 15px; margin-top: 4px; border: 1px solid #000; }
.hue .slider { background: linear-gradient(90deg, #f00, #ff0 16.67%, #0f0 33.33%, #0ff 50%, #00f 66.67%, #f0f 83.33%, #f00); }
.sat .slider { background: linear-gradient(90deg, #5e5e5e, #2a00ff); }
.val .slider { background: linear-gradient(90deg, #000, #fff); }
.red .slider { background: linear-gradient(90deg, #000, #f00); }
.green .slider { background: linear-gradient(90deg, #000, #0f0); }
.blue .slider { background: linear-gradient(90deg, #000, #00f); }
.thumb { position: absolute; top: -6px; width: 5px; height: 24px; border: 2px solid #000; }
.thumb::before { content: ''; display: block; width: 1px; height: 20px; background: #777; opacity: .6; }
.field {
  width: 59px;
  height: 22px;
  margin-left: 6px;
  background: #fff;
  border: 1px solid;
  border-color: #808080 #fff #fff #808080;
  box-shadow: inset 1px 1px #505050;
  padding: 0 1px 0 5px;
  display: flex;
  justify-content: space-between;
  align-items: center;
}
.spin { width: 14px; height: 20px; display: flex; flex-direction: column; background: #d4d0c8; }
.spin i {
  flex: 1;
  display: flex;
  align-items: center;
  justify-content: center;
  border: 1px solid;
  border-color: #fff #404040 #505050 #fff;
}
.right { padding-top: 20px; }
.hex { display: flex; align-items: center; gap: 7px; height: 20px; }
.hex .tx { flex: none; }
.hex-in {
  width: 74px;
  height: 20px;
  padding: 2px 0 0 4px;
  background: #fff;
  border: 1px solid;
  border-color: #808080 #fff #fff #808080;
  box-shadow: inset 1px 1px #404040;
}
.preview-row { display: flex; align-items: center; gap: 6px; margin: 7px 0 0 1px; }
.preview {
  width: 84px;
  height: 84px;
  border: 1px solid #000;
  background: linear-gradient(135deg, #11005e 50%, #fff 50.500%);
  display: flex;
  flex-direction: column;
  justify-content: space-between;
  padding: 0 4px;
  font-size: 13px;
  line-height: 17px;
}
.new-c { align-self: flex-start; color: #e4e2f2; }
.cur-c { align-self: flex-end; color: #222; }
.eye {
  width: 42px;
  height: 42px;
  display: flex;
  align-items: center;
  justify-content: center;
  background: #d5cfc8;
  border: 1px solid;
  border-color: #fff #404040 #404040 #fff;
  box-shadow: inset -1px -1px #999;
}
.swatches { display: grid; grid-template-columns: repeat(5, 48px) 48px 49px; column-gap: 6.400px; row-gap: 7px; margin: 0 0 0 6px; }
.swatch { height: 23px; background: #fff; border: 2px solid #000; }
.btn {
  height: 24px;
  background: #d5cfc8;
  border: 1px solid;
  border-color: #fff #404040 #404040 #fff;
  box-shadow: inset -1px -1px #999;
  display: flex;
  align-items: center;
  justify-content: center;
  padding-top: 1px;
}
.btn.wide { grid-column: span 2; padding-right: 3px; padding-top: 0; }
.actions { display: flex; gap: 5px; margin: 10px 0 0 151px; }
.ok { width: 72px; padding-right: 2px; border-color: #000; box-shadow: inset 1px 1px #fff, inset -1px -1px #707070; }
.cancel { width: 73px; }
.help { width: 76px; }

.watermark { position: absolute; left: 1036px; top: 608px; pointer-events: none; }
.wm-text { font: 48px "Liberation Sans", sans-serif; fill: #fff; fill-opacity: .5; }
</style>
